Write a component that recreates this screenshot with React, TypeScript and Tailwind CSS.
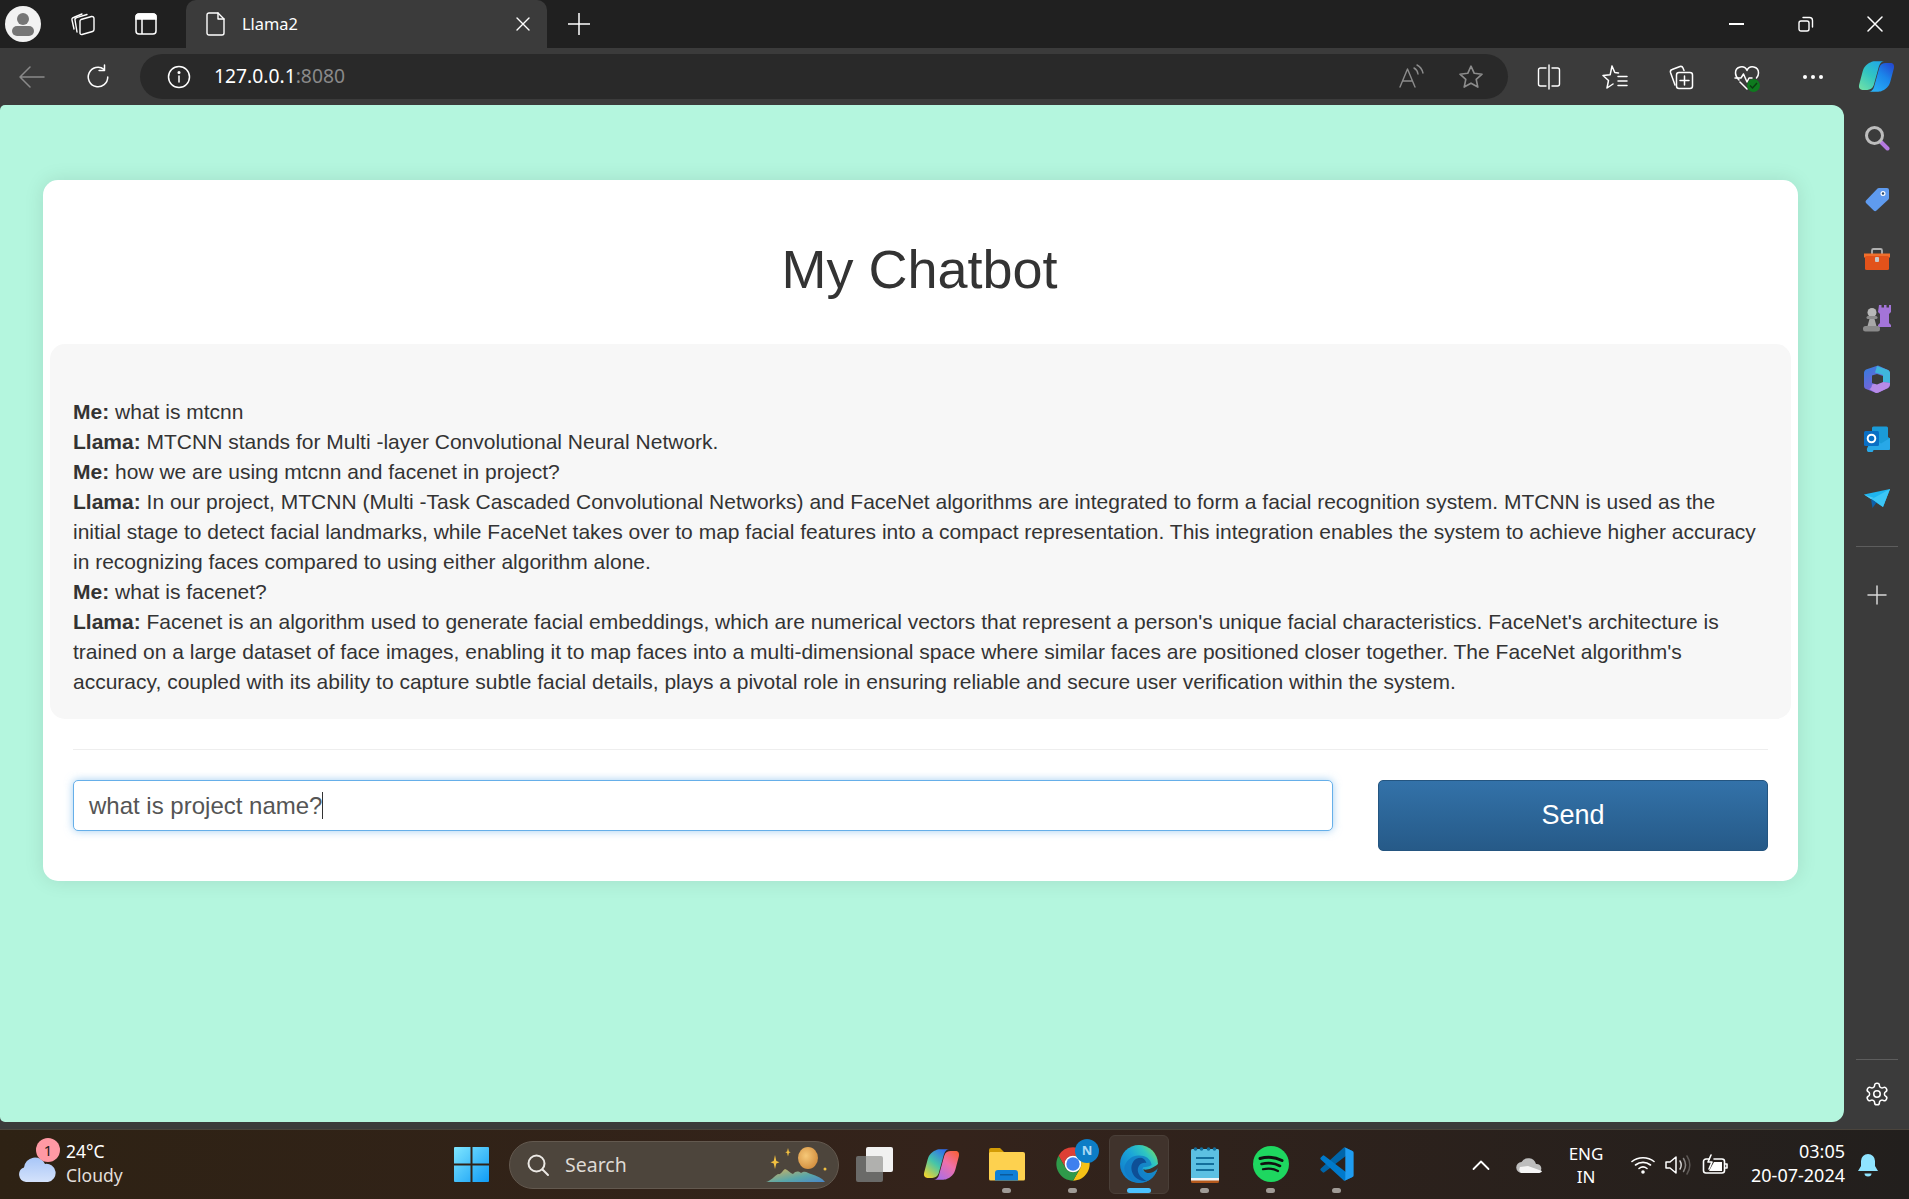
import React from "react";

const UI = "font-['Noto_Sans',sans-serif]";
const stroke = { fill: "none", stroke: "currentColor", strokeLinecap: "round" as const, strokeLinejoin: "round" as const };

function Slot({ w, children }: { w: string; children: React.ReactNode }) {
  return <div className={`${w} flex shrink-0 items-center justify-center`}>{children}</div>;
}

function Copilot({ rainbow, size, id }: { rainbow?: boolean; size: number; id: string }) {
  const blade = "M14 3C15 2.300 16.500 2 18 2H28C25 2.500 23.500 4.500 22.500 8L17 28C16 31.500 13 33 10 33H5C2 33 .5 31 1.200 27.500L5 13C6.500 7.500 10 4.500 14 3Z";
  return (
    <svg width={size} height={size} viewBox="0 0 40 40">
      <defs>
        <linearGradient id={`${id}a`} x1="0.8" y1="0" x2="0.1" y2="1">
          <stop offset="0" stopColor={rainbow ? "#2f6bf0" : "#1fa8e8"} />
          <stop offset="0.5" stopColor={rainbow ? "#46c6a8" : "#33c6c0"} />
          <stop offset="1" stopColor={rainbow ? "#f7d42a" : "#6fe0a8"} />
        </linearGradient>
        <linearGradient id={`${id}b`} x1="0.8" y1="0" x2="0.1" y2="1">
          <stop offset="0" stopColor={rainbow ? "#a86ee8" : "#2ab0f5"} />
          <stop offset="0.55" stopColor={rainbow ? "#f070a8" : "#1b86ea"} />
          <stop offset="1" stopColor={rainbow ? "#f8613a" : "#2448d0"} />
        </linearGradient>
      </defs>
      <path d={blade} fill={`url(#${id}a)`} transform="translate(0 1.500)" />
      <path d={blade} fill={`url(#${id}b)`} transform="translate(40 38.500) rotate(180)" />
    </svg>
  );
}

function Chrome() {
  return (
    <svg width="40" height="42" viewBox="0 0 48 48">
      <path d="M24 4a20 20 0 0 1 17.32 10H24a10 10 0 0 0-8.66 15L6.68 14A20 20 0 0 1 24 4z" fill="#dd4035" />
      <path d="M41.32 14A20 20 0 0 1 24 44l8.66-15A10 10 0 0 0 24 14z" fill="#f5c116" />
      <path d="M6.68 14A20 20 0 0 0 24 44l8.66-15a10 10 0 0 1-17.32 0z" fill="#2f9a4a" />
      <circle cx="24" cy="24" r="10" fill="#fff" />
      <circle cx="24" cy="24" r="8" fill="#3f80ee" />
    </svg>
  );
}

function Edge() {
  return (
    <svg width="38" height="38" viewBox="0 0 36 36">
      <defs>
        <linearGradient id="edgeA" x1="0" y1="1" x2="1" y2="0.2">
          <stop offset="0" stopColor="#0d72c8" />
          <stop offset="0.55" stopColor="#1ba5d8" />
          <stop offset="0.8" stopColor="#2fc6c0" />
          <stop offset="1" stopColor="#6fdc6e" />
        </linearGradient>
      </defs>
      <circle cx="18" cy="18" r="18" fill="url(#edgeA)" />
      <path d="M36 21C33 25 29 27 25 26C22 25.500 20.500 23 22 21C24 21 27 21 30 19C29 13 24 10 18 10C10 10 5 16 4 22C5 30 11 35 18 36C27 36 34 30 36 21Z" fill="#1278c4" opacity="0.75" />
      <path d="M20 12C13 12 10 18 11 24C12 30 18 35 25 34C20 31 16 27 17 22C18 18 21 16 25 17C24 14 22 12 20 12Z" fill="#0e4f96" />
      <path d="M36 22C33 25 30 27 26 26.500C24 26 22.500 25 22 23C25 24 30 23 36 18Z" fill="#40332c" />
    </svg>
  );
}

function VSCode() {
  return (
    <svg width="38" height="38" viewBox="0 0 32 32">
      <path d="M29.01 5.03 23.244 2.254a1.742 1.742 0 0 0-1.989.338L2.38 19.8A1.166 1.166 0 0 0 2.3 21.447c.025.027.05.053.077.077l1.541 1.4a1.165 1.165 0 0 0 1.489.066L28.142 5.75A1.158 1.158 0 0 1 30 6.672V6.605A1.748 1.748 0 0 0 29.01 5.03Z" fill="#0065a9" />
      <path d="M29.01 26.97l-5.766 2.777a1.745 1.745 0 0 1-1.989-.338L2.38 12.2A1.166 1.166 0 0 1 2.3 10.553c.025-.027.05-.053.077-.077l1.541-1.4A1.165 1.165 0 0 1 5.41 9.01l22.732 17.24A1.158 1.158 0 0 0 30 25.328V25.395A1.748 1.748 0 0 1 29.01 26.97Z" fill="#007acc" />
      <path d="M23.244 29.747a1.745 1.745 0 0 1-1.989-.338A1.025 1.025 0 0 0 23 28.684V3.316a1.024 1.024 0 0 0-1.749-.724 1.744 1.744 0 0 1 1.989-.339l5.765 2.772A1.748 1.748 0 0 1 30 6.6V25.4a1.748 1.748 0 0 1-.991 1.576Z" fill="#1f9cf0" />
    </svg>
  );
}

function Spotify() {
  return (
    <svg width="36" height="36" viewBox="0 0 36 36">
      <circle cx="18" cy="18" r="18" fill="#1ed760" />
      <g fill="none" stroke="#111" strokeLinecap="round">
        <path d="M7 12.500C14 10.500 22 11 29 14.500" strokeWidth="3" />
        <path d="M8.500 18C14.500 16.500 21.500 17 27 20" strokeWidth="2.600" />
        <path d="M10 23.200C15 22 20.500 22.500 25 25" strokeWidth="2.200" />
      </g>
    </svg>
  );
}

function Folder() {
  return (
    <svg width="36" height="34" viewBox="0 0 36 34">
      <path d="M0 3a2 2 0 0 1 2-2h9l4 4H2L0 8z" fill="#d39c06" />
      <path d="M0 6.500C0 5.500 1 5 2 5h32a2 2 0 0 1 2 2v25a1.500 1.500 0 0 1-1.500 1.500h-33A1.500 1.500 0 0 1 0 32z" fill="#fdd14f" />
      <path d="M6 33.500V26a3 3 0 0 1 3-3h17a3 3 0 0 1 3 3v7.500z" fill="#0f7fd6" />
      <rect x="11" y="27" width="13" height="1.500" fill="#0a5a9c" />
    </svg>
  );
}

function Notepad() {
  return (
    <svg width="28" height="37" viewBox="0 0 28 37">
      <rect x="0" y="3" width="28" height="34" rx="1.500" fill="#b5591c" />
      <rect x="0" y="3" width="28" height="31" rx="1.500" fill="#5cc0e2" />
      <rect x="0" y="32" width="28" height="2.500" fill="#eef6f8" />
      <g fill="#136f9c">
        <circle cx="4.500" cy="3" r="1.800" /><circle cx="10.500" cy="3" r="1.800" /><circle cx="17.500" cy="3" r="1.800" /><circle cx="23.500" cy="3" r="1.800" />
        <rect x="5" y="11" width="18" height="2" /><rect x="5" y="17" width="18" height="2" /><rect x="5" y="23" width="18" height="2" />
      </g>
    </svg>
  );
}

function TaskView() {
  return (
    <svg width="38" height="36" viewBox="0 0 38 36">
      <rect x="0" y="10" width="27" height="26" rx="2" fill="#6a6a68" />
      <rect x="10" y="1" width="27" height="25" rx="2" fill="#f1f1f1" />
      <path d="M10 10h15a2 2 0 0 1 2 2v14H12a2 2 0 0 1-2-2z" fill="#b0b0ae" />
    </svg>
  );
}

function SearchArt() {
  return (
    <svg width="62" height="36" viewBox="0 0 62 36">
      <defs>
        <linearGradient id="mtn" x1="0" y1="0" x2="1" y2="1">
          <stop offset="0" stopColor="#d9b25a" />
          <stop offset="0.6" stopColor="#5aa7a8" />
          <stop offset="1" stopColor="#4a86c8" />
        </linearGradient>
        <radialGradient id="moon" cx="0.4" cy="0.4" r="0.7">
          <stop offset="0" stopColor="#f6c878" />
          <stop offset="1" stopColor="#d08a3a" />
        </radialGradient>
      </defs>
      <ellipse cx="42" cy="11" rx="10" ry="11" fill="url(#moon)" />
      <path d="M9 8l1.300 6 3.200 1.200-3.200 1.200L9 22l-1.300-5.600L4.500 15.200l3.200-1.200z" fill="#f2c040" />
      <path d="M22 1l.9 3.500 1.800.8-1.800.8-.9 3.400-.9-3.400-1.800-.8 1.800-.8z" fill="#f2c040" />
      <circle cx="59" cy="22" r="1.500" fill="#f2c040" />
      <path d="M0 35c5-1 8-6 12-8 3 1 4-3 7-5 3 1 5 4 8 5 3-3 5-3 8-1 4-3 7 0 10 1 6 2 11 4 14 8z" fill="url(#mtn)" />
    </svg>
  );
}

function Taskbar() {
  return (
    <div className={`${UI} flex h-[70px] shrink-0 items-center border-t border-[#4a443c] bg-gradient-to-r from-[#2e2214] via-[#34231b] to-[#221f1d] text-white`}>
      <div className="relative flex h-full w-[454px] shrink-0 items-center">
        <svg className="ml-[18px] mt-[6px]" width="38" height="30" viewBox="0 0 38 30">
          <defs>
            <linearGradient id="cloud" x1="0" y1="0" x2="0" y2="1"><stop offset="0" stopColor="#a8c6f8" /><stop offset="1" stopColor="#d4e2fb" /></linearGradient>
          </defs>
          <path d="M8 29A7.500 7.500 0 0 1 6 14.500 11 11 0 0 1 27 11a9 9 0 0 1 3 18z" fill="url(#cloud)" />
        </svg>
        <span className="absolute left-[36px] top-[8px] flex h-[24px] w-[24px] items-center justify-center rounded-full bg-[#ff99a4] text-[15px] text-[#1c1c1c]">1</span>
        <div className="-mt-[3px] ml-[10px] flex flex-col text-[17.500px] leading-[24px]">
          <span>24°C</span>
          <span className="text-[#e2dfdb]">Cloudy</span>
        </div>
      </div>
      <svg width="35" height="35" viewBox="0 0 35 35" className="shrink-0">
        <defs>
          <linearGradient id="win" x1="0" y1="0" x2="1" y2="1"><stop offset="0" stopColor="#7fe6ff" /><stop offset="1" stopColor="#0f9bf5" /></linearGradient>
        </defs>
        <path d="M0 1a1 1 0 0 1 1-1h15.500v16.500H0zM18.500 0H34a1 1 0 0 1 1 1v15.500H18.500zM0 18.500h16.500V35H1a1 1 0 0 1-1-1zM18.500 18.500H35V34a1 1 0 0 1-1 1H18.500z" fill="url(#win)" />
      </svg>
      <div className="ml-[20px] flex h-[48px] w-[330px] shrink-0 items-center rounded-full border border-[#63594f] bg-[#4d453c] pl-[16px] pr-[10px]">
        <svg width="24" height="24" viewBox="0 0 24 24" className="text-[#ece9e5]" {...stroke} strokeWidth="2"><circle cx="10.500" cy="10.500" r="8" /><path d="M16.500 16.500l5.500 5.500" /></svg>
        <span className="ml-[15px] flex-1 text-[19.500px] text-[#dedad5]">Search</span>
        <SearchArt />
      </div>
      <div className="ml-[3px] flex h-full shrink-0">
        {[
          { c: <TaskView /> },
          { c: <Copilot rainbow size={37} id="cp2" /> },
          { c: <Folder />, dot: true },
          { c: <Chrome />, dot: true, n: true },
          { c: <Edge />, active: true },
          { c: <Notepad />, dot: true },
          { c: <Spotify />, dot: true },
          { c: <VSCode />, dot: true },
        ].map((it, i) => (
          <div key={i} className="relative flex h-full w-[66px] items-center justify-center pb-[1px]">
            {it.active && <div className="absolute left-[3px] top-[5px] h-[59px] w-[60px] rounded-[6px] border border-[#4a3f38] bg-[#40332c]" />}
            <div className="relative flex items-center justify-center">{it.c}</div>
            {it.n && <span className="absolute left-[35px] top-[9px] flex h-[24px] w-[24px] items-center justify-center rounded-full bg-[#0d7dc6] text-[13px] font-bold text-[#a9d9f5]">N</span>}
            {it.dot && <div className="absolute bottom-[6px] left-[28px] h-[5px] w-[9px] rounded-full bg-[#a09b96]" />}
            {it.active && <div className="absolute bottom-[6px] left-[21px] h-[5px] w-[24px] rounded-full bg-[#4cc2ff]" />}
          </div>
        ))}
      </div>
      <div className="flex-1" />
      <Slot w="w-[32px]">
        <svg width="18" height="12" viewBox="0 0 18 12" {...stroke} strokeWidth="1.800"><path d="M1.500 10L9 2.500 16.500 10" /></svg>
      </Slot>
      <Slot w="w-[64px]">
        <svg width="26" height="16" viewBox="0 0 26 16">
          <path d="M6 16a5.500 5.500 0 0 1-.5-11A8 8 0 0 1 20 7a4.500 4.500 0 0 1 1.500 9z" fill="#bdbdbd" />
          <path d="M5 16a5 5 0 0 1-1-6l8-1 14 5c-.5 1.500-2 2-4 2z" fill="#f5f5f5" />
        </svg>
      </Slot>
      <div className="flex w-[50px] flex-col items-center text-[17px] leading-[23px]">
        <span>ENG</span>
        <span>IN</span>
      </div>
      <div className="w-[14px]" />
      <Slot w="w-[36px]">
        <svg width="24" height="20" viewBox="0 0 24 20" {...stroke} strokeWidth="1.600"><path d="M1 6.500C7 1.500 17 1.500 23 6.500" /><path d="M4.500 10C9 6.500 15 6.500 19.500 10" /><path d="M8 13.500C10.500 11.500 13.500 11.500 16 13.500" /><circle cx="12" cy="17" r="1" fill="currentColor" /></svg>
      </Slot>
      <Slot w="w-[34px]">
        <svg width="26" height="22" viewBox="0 0 26 22" {...stroke} strokeWidth="1.500"><path d="M1 8h4l6-5v16l-6-5H1z" /><path d="M15 7c1.500 2.500 1.500 5.500 0 8" opacity="0.8" /><path d="M18.500 4.500c2.500 4 2.500 9 0 13" opacity="0.45" /><path d="M22 2c3.500 5.500 3.500 12.500 0 18" opacity="0.25" /></svg>
      </Slot>
      <Slot w="w-[40px]">
        <svg width="26" height="22" viewBox="0 0 26 22" {...stroke} strokeWidth="1.600"><path d="M7 5H4a2.500 2.500 0 0 0-2.500 2.500v9A2.500 2.500 0 0 0 4 19h16a2.500 2.500 0 0 0 2.500-2.500v-9A2.500 2.500 0 0 0 20 5h-8" /><path d="M23 10h2v4h-2" /><path d="M9 1L6 8h4l-3 7" /><path d="M12 8h8v9H7z" fill="currentColor" stroke="none" /></svg>
      </Slot>
      <div className="-mt-[3px] flex w-[110px] flex-col items-end text-[18px] leading-[24px]">
        <span>03:05</span>
        <span>20-07-2024</span>
      </div>
      <Slot w="w-[46px]">
        <svg width="22" height="24" viewBox="0 0 22 24"><path d="M11 1a7 7 0 0 1 7 7v5l3 5H1l3-5V8a7 7 0 0 1 7-7z" fill="#8fe4ff" /><path d="M7.500 20.500h7a3.500 3 0 0 1-7 0z" fill="#8fe4ff" /></svg>
      </Slot>
      <div className="w-[18px]" />
    </div>
  );
}

function Sidebar() {
  return (
    <div className="flex w-[65px] shrink-0 flex-col items-center pl-[1px] pt-[20px] pb-[22px]">
      <svg width="26" height="26" viewBox="0 0 26 26"><path d="M16.500 16.500l7 7" stroke="#b57ae0" strokeWidth="4" strokeLinecap="round" /><circle cx="10.500" cy="10.500" r="8" fill="none" stroke="#bdbdbd" strokeWidth="3" /></svg>
      <svg className="mt-[35px]" width="26" height="26" viewBox="0 0 26 26"><path d="M2 14.500L13.500 2.500a2 2 0 0 1 1.500-.5h8a2 2 0 0 1 2 2v8a2 2 0 0 1-.6 1.500L12.500 24.500a2 2 0 0 1-2.800 0L2 17a2 2 0 0 1 0-2.500z" fill="#5f9bef" /><circle cx="19" cy="7.500" r="2.500" fill="#fff" /><circle cx="19" cy="7.500" r="1.200" fill="#26486f" /></svg>
      <svg className="mt-[35px]" width="28" height="24" viewBox="0 0 28 24"><path d="M9 7V3.500A1.500 1.500 0 0 1 10.500 2h7A1.500 1.500 0 0 1 19 3.500V7" fill="none" stroke="#b0b0b0" strokeWidth="1.800" /><path d="M1 6.500h26v4H1z" fill="#f06f2c" /><rect x="2" y="9" width="24" height="14" rx="1.500" fill="#e2521a" /><rect x="12" y="10" width="4" height="5" rx="1" fill="#c8c8c8" /></svg>
      <svg className="mt-[33px]" width="28" height="28" viewBox="0 0 28 28"><path d="M16 1h2.500v2.500H21V1h2.500v2.500H26V1h2v7l-2 2v9l2 2v2H15v-2l2-2v-9l-2-2z" fill="#a374d8" /><circle cx="9" cy="8.500" r="4.500" fill="#b8b8b8" /><rect x="3.500" y="12" width="11" height="3" rx="1.500" fill="#8d8d8d" /><path d="M6.500 15h5l2 7h-9z" fill="#a8a8a8" /><rect x="0" y="22" width="17" height="5.500" rx="2.500" fill="#8a8a8a" /></svg>
      <svg className="mt-[33px]" width="26" height="28" viewBox="0 0 26 28">
        <defs><linearGradient id="o1" x1="0" y1="0" x2="0.6" y2="1"><stop offset="0" stopColor="#2f7fe0" /><stop offset="1" stopColor="#8a5cd6" /></linearGradient></defs>
        <path d="M11 1.500L14 .5 24 5c1 .5 2 2 2 3v12c0 1-.5 2-2 3l-9.500 4.500c-1 .5-2 .5-3 .2L2 24c-1.500-.5-2-2-2-3V8c0-1.500.8-2.800 2-3.500z" fill="url(#o1)" />
        <path d="M13 1L24 5c1 .5 2 2 2 3v10l-7-1V10L11 7.500z" fill="#3fb6dc" />
        <path d="M8 19.500l11-2.500 7 1c0 2-1 4-2 5l-9.500 4.500c-1 .5-2 .5-3 .2L5 24c1.500 0 3-2 3-4.500z" fill="#b78be8" />
        <path d="M8 10.500L13 9l6 2v6l-6 2.500-5-1.500z" fill="#3b3b3b" />
      </svg>
      <svg className="mt-[33px]" width="26" height="26" viewBox="0 0 26 26"><path d="M8 2a1.500 1.500 0 0 1 1.500-1.500h13A1.500 1.500 0 0 1 24 2v9l2 1.500v10A1.500 1.500 0 0 1 24.500 24h-15A1.500 1.500 0 0 1 8 22.500z" fill="#1a9bd8" /><path d="M8 12l9 5.500 9-5.500v10.500a1.500 1.500 0 0 1-1.500 1.500h-15A1.500 1.500 0 0 1 3 22.500z" fill="#28a8e8" /><rect x="0" y="5" width="15" height="15" rx="1.500" fill="#0a6fc4" /><circle cx="7.500" cy="12.500" r="3.800" fill="none" stroke="#fff" strokeWidth="2" /></svg>
      <svg className="mt-[37px]" width="26" height="20" viewBox="0 0 26 20"><path d="M0 5.500L26 0 19 18z" fill="#1eb5f0" /><path d="M0 5.500L7 10l3-1z" fill="#4dc9f5" /><path d="M7 10l1.500 9 4-5.500z" fill="#0d5fa8" /><path d="M26 0L8 10l11 8z" fill="#3cc6f6" /></svg>
      <div className="mt-[37px] h-px w-[42px] bg-[#5d5d5d]" />
      <svg className="mt-[38px] text-[#d8d8d8]" width="20" height="20" viewBox="0 0 20 20" {...stroke} strokeWidth="1.500"><path d="M1 10h18M10 1v18" /></svg>
      <div className="flex-1" />
      <div className="h-px w-[42px] bg-[#5d5d5d]" />
      <svg className="mt-[21px] text-white" width="26" height="26" viewBox="0 0 24 24" {...stroke} strokeWidth="1.400"><path d="M12.220 2h-.44a2 2 0 0 0-2 2v.18a2 2 0 0 1-1 1.730l-.43.250a2 2 0 0 1-2 0l-.15-.08a2 2 0 0 0-2.730.730l-.22.380a2 2 0 0 0 .730 2.730l.15.100a2 2 0 0 1 1 1.720v.510a2 2 0 0 1-1 1.740l-.15.090a2 2 0 0 0-.73 2.730l.22.380a2 2 0 0 0 2.730.730l.15-.08a2 2 0 0 1 2 0l.43.250a2 2 0 0 1 1 1.730V20a2 2 0 0 0 2 2h.44a2 2 0 0 0 2-2v-.18a2 2 0 0 1 1-1.730l.43-.250a2 2 0 0 1 2 0l.15.080a2 2 0 0 0 2.730-.730l.22-.390a2 2 0 0 0-.73-2.730l-.15-.080a2 2 0 0 1-1-1.740v-.500a2 2 0 0 1 1-1.740l.15-.090a2 2 0 0 0 .73-2.730l-.22-.380a2 2 0 0 0-2.730-.730l-.15.080a2 2 0 0 1-2 0l-.43-.250a2 2 0 0 1-1-1.730V4a2 2 0 0 0-2-2z" /><circle cx="12" cy="12" r="3" /></svg>
    </div>
  );
}

function Line({ who, children }: { who: string; children: React.ReactNode }) {
  return <div><b className="font-bold">{who}:</b> {children}</div>;
}

function Card() {
  return (
    <div className="flex h-[701px] w-[1755px] flex-col rounded-[15px] bg-white px-[7px] shadow-[0_0_20px_rgba(0,0,0,0.1)] font-['Liberation_Sans',sans-serif]">
      <div className="flex h-[164px] shrink-0 items-center justify-center pt-[13px]">
        <h1 className="-translate-x-px text-[54px] leading-none font-normal text-[#333]">My Chatbot</h1>
      </div>
      <div className="h-[375px] shrink-0 rounded-[15px] bg-[#f7f7f7] pl-[23px] pr-[23px] pt-[53px] text-[21px] leading-[30px] text-[#333]">
        <Line who="Me">what is mtcnn</Line>
        <Line who="Llama">MTCNN stands for Multi -layer Convolutional Neural Network.</Line>
        <Line who="Me">how we are using mtcnn and facenet in project?</Line>
        <Line who="Llama">In our project, MTCNN (Multi -Task Cascaded Convolutional Networks) and FaceNet algorithms are integrated to form a facial recognition system. MTCNN is used as the initial stage to detect facial landmarks, while FaceNet takes over to map facial features into a compact representation. This integration enables the system to achieve higher accuracy in recognizing faces compared to using either algorithm alone.</Line>
        <Line who="Me">what is facenet?</Line>
        <Line who="Llama">Facenet is an algorithm used to generate facial embeddings, which are numerical vectors that represent a person's unique facial characteristics. FaceNet's architecture is trained on a large dataset of face images, enabling it to map faces into a multi-dimensional space where similar faces are positioned closer together. The FaceNet algorithm's accuracy, coupled with its ability to capture subtle facial details, plays a pivotal role in ensuring reliable and secure user verification within the system.</Line>
      </div>
      <div className="mx-[23px] mt-[30px] h-px shrink-0 bg-[#eeeeee]" />
      <div className="mx-[23px] mt-[30px] flex items-start justify-between">
        <div className="flex h-[51px] w-[1260px] items-center rounded-[5px] border border-[#66afe9] bg-white pl-[15px] text-[24px] text-[#555] shadow-[0_0_8px_rgba(102,175,233,0.6)]">
          <span>what is project name?</span>
          <span className="h-[27px] w-px bg-[#333]" />
        </div>
        <button className="h-[71px] w-[390px] rounded-[5px] border border-[#245580] bg-gradient-to-b from-[#3372a9] to-[#265a88] text-[27px] text-white">Send</button>
      </div>
    </div>
  );
}

export default function App() {
  return (
    <div className="flex h-[1199px] w-[1909px] flex-col overflow-hidden bg-[#3b3b3b]">
      <div className={`${UI} flex h-[48px] shrink-0 items-center bg-[#202020] text-white`}>
        <Slot w="w-[45px]">
          <div className="relative h-[36px] w-[36px] overflow-hidden rounded-full bg-[#f2f2f2]">
            <div className="absolute left-[12px] top-[7px] h-[12px] w-[12px] rounded-full bg-[#767676]" />
            <div className="absolute left-[7px] top-[20px] h-[10px] w-[22px] rounded-[6px] bg-[#767676]" />
          </div>
        </Slot>
        <Slot w="w-[76px]">
          <svg width="26" height="26" viewBox="0 0 26 26" {...stroke} strokeWidth="1.400"><path d="M11 8.500l10.500-3a2 2 0 0 1 2.500 2v11a2 2 0 0 1-1.500 2L12 23.500a1.500 1.500 0 0 1-2-1.500V10a2 2 0 0 1 1-1.500z" /><path d="M7 21L5 9a2 2 0 0 1 1.500-2.300L17 3.500" /><path d="M4 18L2 9a2 2 0 0 1 1.500-2.500L12 3" /></svg>
        </Slot>
        <Slot w="w-[50px]">
          <svg width="22" height="24" viewBox="0 0 22 24" fill="none" stroke="currentColor" strokeWidth="1.500"><rect x="1" y="2" width="20" height="20" rx="3" /><path d="M1 7h20V5a3 3 0 0 0-3-3H4a3 3 0 0 0-3 3z" fill="currentColor" /><path d="M7 7v15" /></svg>
        </Slot>
        <div className="ml-[15px] flex h-[48px] w-[361px] shrink-0 items-center rounded-t-[10px] bg-[#3b3b3b] pl-[20px] pr-[17px]">
          <svg width="20" height="24" viewBox="0 0 20 24" {...stroke} strokeWidth="1.400"><path d="M3 1h9l6 6v14a2 2 0 0 1-2 2H3a2 2 0 0 1-2-2V3a2 2 0 0 1 2-2z" /><path d="M12 1v6h6" /></svg>
          <span className="ml-[16px] flex-1 text-[16.400px]">Llama2</span>
          <svg width="14" height="14" viewBox="0 0 14 14" {...stroke} strokeWidth="1.400"><path d="M1 1l12 12M13 1L1 13" /></svg>
        </div>
        <Slot w="w-[64px]">
          <svg width="22" height="22" viewBox="0 0 22 22" {...stroke} strokeWidth="1.500"><path d="M11 0v22M0 11h22" /></svg>
        </Slot>
        <div className="flex-1" />
        <Slot w="w-[69px]"><div className="h-[2px] w-[15px] bg-white" /></Slot>
        <Slot w="w-[69px]">
          <svg width="16" height="16" viewBox="0 0 16 16" {...stroke} strokeWidth="1.400"><rect x="1" y="5" width="10" height="10" rx="2" /><path d="M5 1.500h6.500a3 3 0 0 1 3 3V11" /></svg>
        </Slot>
        <Slot w="w-[69px]">
          <svg width="16" height="16" viewBox="0 0 16 16" {...stroke} strokeWidth="1.500"><path d="M1 1l14 14M15 1L1 15" /></svg>
        </Slot>
      </div>

      <div className={`${UI} flex h-[57px] shrink-0 items-start bg-[#3b3b3b] pt-[6px] text-white`}>
        <div className="flex h-[45px] w-[64px] shrink-0 items-center justify-center text-[#8a8a8a]">
          <svg width="26" height="24" viewBox="0 0 26 24" {...stroke} strokeWidth="1.500"><path d="M25 12H1M11 2L1 12l10 10" /></svg>
        </div>
        <div className="flex h-[45px] w-[68px] shrink-0 items-center justify-center">
          <svg width="26" height="26" viewBox="0 0 24 24" {...stroke} strokeWidth="1.400"><path d="M21 12a9 9 0 1 1-3.500-7.100" /><path d="M18 1v5h-5" /></svg>
        </div>
        <div className="ml-[8px] flex h-[45px] w-[1368px] shrink-0 items-center rounded-full bg-[#292929] pl-[27px] pr-[8px]">
          <svg width="24" height="24" viewBox="0 0 24 24" {...stroke} strokeWidth="1.500"><circle cx="12" cy="12" r="10.500" /><path d="M12 11v6" /><circle cx="12" cy="7.500" r="0.800" fill="currentColor" /></svg>
          <span className="ml-[23px] flex-1 text-[19.300px]">127.0.0.1<span className="text-[#8a8a8a]">:8080</span></span>
          <Slot w="w-[59px]">
            <svg className="text-[#8c8c8c]" width="26" height="26" viewBox="0 0 26 26" {...stroke} strokeWidth="1.400"><path d="M1 23L8.500 5 16 23M3.500 17h10" /><path d="M15 4c2 1 3.500 3 4 6" /><path d="M18 1c3 1.500 5 4 6 8" /></svg>
          </Slot>
          <Slot w="w-[59px]">
            <svg className="text-[#8c8c8c]" width="26" height="26" viewBox="0 0 24 24" {...stroke} strokeWidth="1.500"><path d="M12 2l3 6.600 7.200.8-5.400 4.800 1.500 7.100L12 17.700 5.700 21.300l1.500-7.100L1.800 9.400 9 8.600z" /></svg>
          </Slot>
        </div>
        <div className="ml-[8px] flex shrink-0">
          <div className="flex h-[45px] w-[66px] items-center justify-center">
            <svg width="24" height="26" viewBox="0 0 24 26" {...stroke} strokeWidth="1.400"><path d="M9 4H3.500A2 2 0 0 0 1.500 6v14a2 2 0 0 0 2 2H9M15 4h5.500a2 2 0 0 1 2 2v14a2 2 0 0 1-2 2H15M12 1v24" /></svg>
          </div>
          <div className="flex h-[45px] w-[66px] items-center justify-center">
            <svg width="26" height="26" viewBox="0 0 26 26" {...stroke} strokeWidth="1.500"><path d="M10 2l2.800 6.500 3.700.4M11 20l-6 4 1.500-7.500L1 11.500l7.200-.8L10 2" /><path d="M16 12.500h9M16 17h9M16 21.500h9" /></svg>
          </div>
          <div className="flex h-[45px] w-[66px] items-center justify-center">
            <svg width="26" height="26" viewBox="0 0 26 26" {...stroke} strokeWidth="1.500"><path d="M7 21L2.500 8.500a2.500 2.500 0 0 1 1.600-3L12 2.500a2.500 2.500 0 0 1 3 1.500l1 2.500" /><rect x="8.500" y="8.500" width="16" height="16" rx="2.500" /><path d="M16.500 12v9M12 16.500h9" /></svg>
          </div>
          <div className="relative flex h-[45px] w-[66px] items-center justify-center">
            <svg width="26" height="26" viewBox="0 0 26 26" {...stroke} strokeWidth="1.500"><path d="M5 16C2.500 13.500 1.500 11.500 1.500 9A6 6 0 0 1 13 6.500 6 6 0 0 1 24.500 9c0 2-.5 3.500-2 5" /><path d="M1 14h6l2.500-4 3.500 8 2-4h3" /><path d="M6 18l7 7" /></svg>
            <div className="absolute left-[33px] top-[25px] flex h-[13px] w-[13px] items-center justify-center rounded-full bg-[#0e7a1e]">
              <svg width="9" height="9" viewBox="0 0 9 9" fill="none" stroke="#0b3d12" strokeWidth="1.500"><path d="M1 4.500l2.500 2.500L8 2" /></svg>
            </div>
          </div>
          <div className="flex h-[45px] w-[66px] items-center justify-center gap-[4px]">
            <span className="h-[4px] w-[4px] rounded-full bg-white" /><span className="h-[4px] w-[4px] rounded-full bg-white" /><span className="h-[4px] w-[4px] rounded-full bg-white" />
          </div>
          <div className="flex h-[45px] w-[60px] items-center justify-center"><Copilot size={37} id="cp1" /></div>
        </div>
      </div>

      <div className="flex h-[1024px] shrink-0">
        <div className="h-[1017px] w-[1844px] shrink-0 rounded-l-[5px] rounded-r-[12px] bg-[#b4f6de] pl-[43px] pt-[75px]">
          <Card />
        </div>
        <Sidebar />
      </div>
      <Taskbar />
    </div>
  );
}
